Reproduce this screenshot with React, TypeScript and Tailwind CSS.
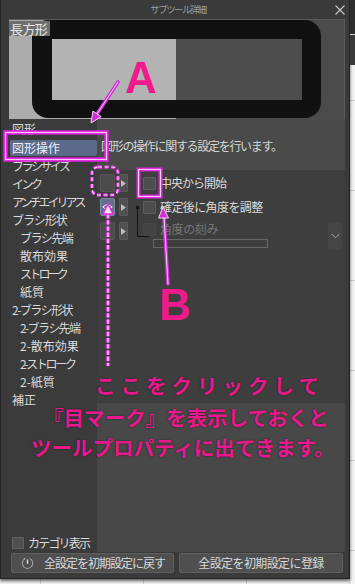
import React from "react";

const rows: [string, boolean, string][] = [
  ["ブラシサイズ", false, "tracking-[-2.5px]"],
  ["インク", false, "tracking-[-2.5px]"],
  ["アンチエイリアス", false, "tracking-[-3px]"],
  ["ブラシ形状", false, "tracking-[-1px]"],
  ["ブラシ先端", true, "tracking-[-1.5px]"],
  ["散布効果", true, "tracking-[0px]"],
  ["ストローク", true, "tracking-[-2.8px]"],
  ["紙質", true, "tracking-[0px]"],
  ["2-ブラシ形状", false, "tracking-[-1.5px]"],
  ["2-ブラシ先端", true, "tracking-[-1.6px]"],
  ["2-散布効果", true, "tracking-[0px]"],
  ["2-ストローク", true, "tracking-[-2.3px]"],
  ["2-紙質", true, "tracking-[0px]"],
  ["補正", false, "tracking-[0px]"],
];

function EyeBox({ active }: { active?: boolean }) {
  if (active) {
    return (
      <div className="w-[15px] h-[18px] rounded-[2px] bg-[#63718c] border border-[#7b89a3] flex items-center justify-center">
        <svg width="11" height="8" viewBox="0 0 11 8">
          <path d="M0.8 4 Q5.5 -0.5 10.2 4 Q5.5 8.5 0.8 4Z" fill="none" stroke="#f2f2f2" strokeWidth="1" />
          <circle cx="5.5" cy="4" r="1.6" fill="#f2f2f2" />
        </svg>
      </div>
    );
  }
  return <div className="w-[15px] h-[18px] rounded-[2px] bg-[#4b4b4b] border border-[#565656]" />;
}

function ArrowBtn() {
  return (
    <div className="w-[9px] h-[18px] rounded-[1px] bg-[#505050] border border-[#5b5b5b] flex items-center justify-center">
      <svg width="5" height="7" viewBox="0 0 5 7">
        <path d="M0 0L5 3.5L0 7Z" fill="#bdbdbd" />
      </svg>
    </div>
  );
}

function Check({ dim }: { dim?: boolean }) {
  return dim ? (
    <div className="w-[13px] h-[13px] shrink-0 rounded-[1px] bg-[#434343] border border-[#474747]" />
  ) : (
    <div className="w-[13px] h-[13px] shrink-0 rounded-[1px] bg-[#4d4d4d] border border-[#5e5e5e]" />
  );
}

function Preview() {
  return (
    <div className="relative h-[100px]">
      <svg width="336" height="100" viewBox="0 0 336 100" className="block">
        <rect x="0" y="0" width="167" height="100" fill="#ababab" />
        <rect x="167" y="0" width="169" height="100" fill="#4b4b4b" />
        <rect x="23" y="1" width="289" height="98" rx="16" fill="#111111" />
        <rect x="43" y="20" width="124" height="61" fill="#b3b3b3" />
        <rect x="167" y="20" width="126" height="61" fill="#4d4d4d" />
        <line x1="0" y1="0.5" x2="336" y2="0.5" stroke="#5a5a5a" strokeWidth="1" />
        <line x1="335.5" y1="0" x2="335.5" y2="100" stroke="#5a5a5a" strokeWidth="1" />
      </svg>
      <div className="absolute left-0 top-[2px] h-[15px] w-[41px] bg-[#6e6e6e] text-[13px] leading-[15px] text-[#e8e8e8] pl-[1px] tracking-[-0.6px] whitespace-nowrap">
        長方形
      </div>
    </div>
  );
}

function LeftColumn() {
  return (
    <div className="w-[88px] flex flex-col bg-[#3b3b3b] text-[12px] text-[#dadada] whitespace-nowrap">
      <div className="h-[19px] flex items-center pl-[3px]">図形</div>
      <div className="h-[19px] pt-[2px] pb-[1px] pl-[1px]">
        <div className="h-full bg-[#5b6a86] rounded-[2px] flex items-center pl-[2px] text-[#eef0ff]">図形操作</div>
      </div>
      {rows.map(([t, indent, tr]) => (
        <div key={t} className={indent ? "h-[18px] flex items-center pl-[11px]" : "h-[18px] flex items-center pl-[3px]"}>
          <span className={tr}>{t}</span>
        </div>
      ))}
      <div className="flex-1" />
      <div className="h-[16px] mb-[1px] flex items-center gap-[4px] pl-[3px]">
        <div className="w-[12px] h-[12px] shrink-0 bg-[#505050] border border-[#5f5f5f]" />
        <span className="tracking-[-1.8px]">カテゴリ表示</span>
      </div>
    </div>
  );
}

function RightColumn() {
  return (
    <div className="flex-1 flex flex-col text-[12px] whitespace-nowrap">
      <div className="h-[51px] bg-[#4a4a4a] flex items-center pl-[4px] pt-[2px] text-[#d6d6d6] tracking-[-1.3px]">
        図形の操作に関する設定を行います。
      </div>
      <div className="relative h-[233px] bg-[#3e3e3e] pt-[4px] flex flex-col gap-[6px] text-[#dadada]">
        <div className="flex items-start h-[18px]">
          <div className="ml-[3px]">
            <EyeBox />
          </div>
          <div className="ml-[4px]">
            <ArrowBtn />
          </div>
          <div className="ml-[15px] h-[18px] flex items-center">
            <Check />
            <span className="ml-[4px] tracking-[-1px]">中央から開始</span>
          </div>
        </div>
        <div className="flex items-start h-[18px]">
          <div className="ml-[3px]">
            <EyeBox active />
          </div>
          <div className="ml-[4px]">
            <ArrowBtn />
          </div>
          <div className="ml-[15px] h-[18px] flex items-center">
            <Check />
            <span className="ml-[4px] tracking-[-0.6px]">確定後に角度を調整</span>
          </div>
        </div>
        <div className="flex items-start h-[28px]">
          <div className="ml-[3px]">
            <EyeBox />
          </div>
          <div className="ml-[4px]">
            <ArrowBtn />
          </div>
          <div className="ml-[15px] flex-1 flex flex-col">
            <div className="h-[14px] flex items-center">
              <Check dim />
              <span className="ml-[4px] text-[#777777] tracking-[-0.4px]">角度の刻み</span>
            </div>
            <div className="mt-[3px] ml-[10px] w-[115px] h-[9px] border border-[#676767]" />
          </div>
          <div className="mr-[3px] w-[14px] h-[28px] bg-[#454545] rounded-[2px] flex items-center justify-center">
            <svg width="9" height="6" viewBox="0 0 9 6">
              <path d="M0.5 0.8L4.5 4.8L8.5 0.8" fill="none" stroke="#a8a8a8" strokeWidth="1" />
            </svg>
          </div>
        </div>
        <div className="absolute left-[40px] top-[37px] w-[12px] h-[30px] border-l border-b border-[#141414]" />
        <div className="absolute left-[39px] top-[36px] w-[3px] h-[3px] bg-[#141414]" />
      </div>
      <div className="flex-1 bg-[#484848]" />
    </div>
  );
}

function Dialog() {
  return (
    <div className="w-[350px] h-[579px] flex flex-col bg-[#3a3a3a] border-x border-b border-[#232323] shadow-[0_2px_3px_rgba(0,0,0,0.6)]">
      <div className="h-[19px] grid grid-cols-[1fr_auto_1fr] items-center">
        <div />
        <div className="ml-[6px] text-[9.5px] leading-none text-[#9c9c9c] tracking-[-1.6px] whitespace-nowrap">サブツール詳細</div>
        <div className="justify-self-end pr-[4px] flex">
          <svg width="10" height="10" viewBox="0 0 10 10">
            <path d="M0.5 0.5L9.5 9.5M9.5 0.5L0.5 9.5" stroke="#c8c8c8" strokeWidth="1.1" />
          </svg>
        </div>
      </div>
      <div className="flex-1 flex flex-col pl-[8px] pr-[4px]">
        <Preview />
        <div className="h-[433px] flex">
          <LeftColumn />
          <RightColumn />
        </div>
        <div className="mt-[1px] h-[20px] flex gap-[5px] pl-[2px] text-[12px] text-[#d8d8d8] whitespace-nowrap">
          <div className="w-[163px] h-[20px] bg-[#4f4f4f] border border-[#5f5f5f] rounded-[2px] flex items-center overflow-hidden">
            <svg width="13" height="13" viewBox="0 0 13 13" className="ml-[9px] shrink-0">
              <path d="M4.2 1.6 A5.2 5.2 0 1 0 8.8 1.6" fill="none" stroke="#a0a0a0" strokeWidth="1.1" />
              <path d="M6.5 6.8 L6.5 2.6" stroke="#e6e6e6" strokeWidth="1.3" />
              <path d="M2.6 0.8 L4.6 1.2 L3.8 3.0Z" fill="#a0a0a0" />
            </svg>
            <span className="ml-[10px] tracking-[-1px]">全設定を初期設定に戻す</span>
          </div>
          <div className="w-[164px] h-[20px] bg-[#4f4f4f] border border-[#5f5f5f] rounded-[2px] flex items-center justify-center">
            <span className="tracking-[-0.6px]">全設定を初期設定に登録</span>
          </div>
        </div>
      </div>
    </div>
  );
}

function Annotations() {
  return (
    <>
      <svg className="absolute left-0 top-0 pointer-events-none" width="355" height="584" viewBox="0 0 355 584">
        <rect x="5.5" y="132.5" width="101" height="27" fill="none" stroke="#e020e0" strokeWidth="4.5" />
        <rect x="5.5" y="132.5" width="101" height="27" fill="none" stroke="#f9c8f9" strokeWidth="1.2" />
        <rect x="138.5" y="169.5" width="22" height="27" fill="none" stroke="#e020e0" strokeWidth="4" />
        <rect x="138.5" y="169.5" width="22" height="27" fill="none" stroke="#f9c8f9" strokeWidth="1.2" />
        <rect x="92" y="167" width="26" height="28" rx="6" fill="none" stroke="#e030e0" strokeWidth="3.6" strokeDasharray="4 2.6" />
        <rect x="92" y="167" width="26" height="28" rx="6" fill="none" stroke="#fde2fd" strokeWidth="1.2" strokeDasharray="4 2.6" />
        <line x1="108" y1="214" x2="108" y2="366" stroke="#e030e0" strokeWidth="4.4" strokeDasharray="4.4 1.8" />
        <line x1="108" y1="214" x2="108" y2="366" stroke="#fde2fd" strokeWidth="1.4" strokeDasharray="4.4 1.8" />
        <polygon points="108,204 103,214 113,214" fill="#fde2fd" stroke="#e030e0" strokeWidth="1.5" />
        <line x1="118" y1="82" x2="97" y2="114" stroke="#d22ed8" strokeWidth="3.6" strokeLinecap="round" />
        <line x1="118" y1="82" x2="97" y2="114" stroke="#f6d0f8" strokeWidth="1" strokeLinecap="round" />
        <polygon points="91,123 92.9,111.1 101.2,116.6" fill="#d22ed8" stroke="#f6d0f8" strokeWidth="1" />
        <line x1="168" y1="284" x2="164" y2="217" stroke="#d22ed8" strokeWidth="3.6" strokeLinecap="round" />
        <line x1="168" y1="284" x2="164" y2="217" stroke="#f6d0f8" strokeWidth="1" strokeLinecap="round" />
        <polygon points="163,207 158.5,218 168.5,218" fill="#d22ed8" stroke="#f6d0f8" strokeWidth="1" />
      </svg>
      <div className="absolute left-[125px] top-[56px] text-[44px] leading-[44px] font-bold text-[#ef1a8c] font-['Liberation_Sans',Arial,sans-serif]">
        A
      </div>
      <div className="absolute left-[159px] top-[283px] text-[44px] leading-[44px] font-bold text-[#ef1a8c] font-['Liberation_Sans',Arial,sans-serif]">
        B
      </div>
      <div className="absolute left-[95px] top-[373px] text-[20.5px] leading-[24px] font-bold tracking-[5px] whitespace-nowrap text-[#e8198c] [text-shadow:0_0_2px_rgba(0,0,0,0.55)]">
        ここをクリックして
      </div>
      <div className="absolute left-[43px] top-[405px] text-[20.5px] leading-[24px] font-bold whitespace-nowrap text-[#e8198c] [text-shadow:0_0_2px_rgba(0,0,0,0.55)]">
        『目マーク』を表示しておくと
      </div>
      <div className="absolute left-[31px] top-[435px] text-[20.5px] leading-[24px] font-bold whitespace-nowrap text-[#e8198c] [text-shadow:0_0_2px_rgba(0,0,0,0.55)]">
        ツールプロパティに出てきます。
      </div>
    </>
  );
}

export default function App() {
  return (
    <div className="relative w-[355px] h-[584px] overflow-hidden bg-[#f3f3f3] bg-[linear-gradient(#cdcdcd_1px,transparent_1px),linear-gradient(90deg,#cdcdcd_1px,transparent_1px)] [background-size:103px_90px] [background-position:40px_10px] font-['Noto_Sans_CJK_JP','Noto_Sans',sans-serif]">
      <div className="flex items-start">
        <Dialog />
        <div className="flex flex-col w-[5px]">
          <div className="h-[34px] bg-[#2e2e2e]" />
          <div className="h-px bg-[#d0d0d0]" />
          <div className="h-[30px] bg-[#3a3a3a]" />
        </div>
      </div>
      <Annotations />
    </div>
  );
}
